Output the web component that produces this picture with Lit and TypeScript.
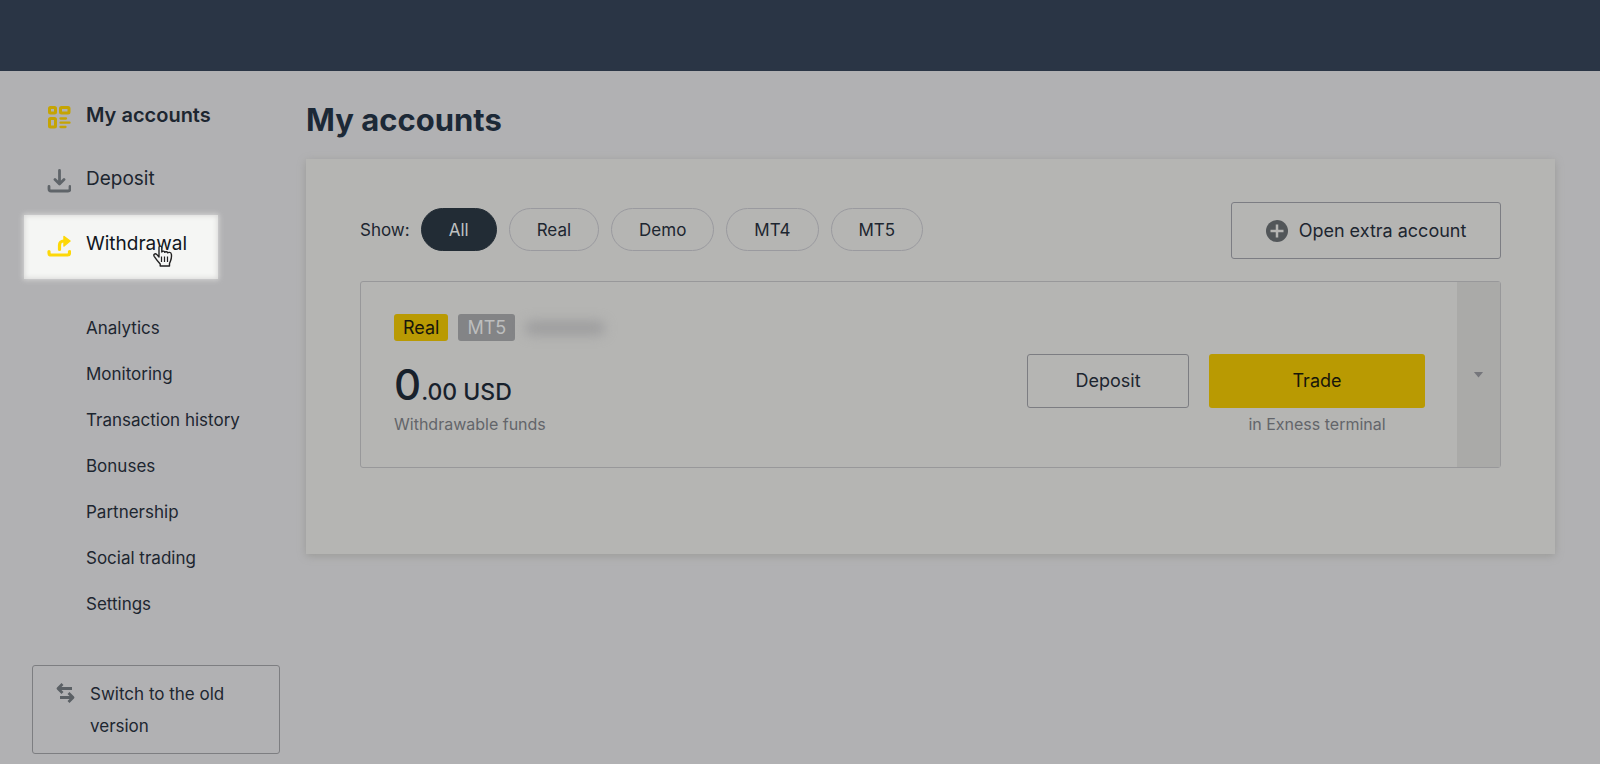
import { LitElement, html, css, svg } from "lit";
import { customElement, state } from "lit/decorators.js";

const gridIcon = svg`<svg class="icon" viewBox="0 0 24 24" fill="none" stroke="currentColor" stroke-width="3" stroke-linejoin="round" stroke-linecap="round">
  <rect x="2.5" y="2.5" width="6" height="5.5" rx="1"/>
  <rect x="13.500" y="2.5" width="8.500" height="5.5" rx="1"/>
  <rect x="2.5" y="13.500" width="6" height="8.500" rx="1"/>
  <path stroke-width="2.300" d="M13.500 13.500h5.500M13.500 17.700h9M13.500 22h5"/>
</svg>`;

const depositIcon = svg`<svg class="icon" viewBox="0 0 24 24" fill="none" stroke="currentColor" stroke-width="2.800" stroke-linejoin="round" stroke-linecap="round">
  <path d="M12.500 1.500v13M8 10.500l4.500 4.500 4.500-4.500M2 17.500v2.500a2 2 0 0 0 2 2h17a2 2 0 0 0 2-2v-2.500"/>
</svg>`;

const withdrawIcon = svg`<svg class="icon" viewBox="0 0 24 24" fill="none" stroke="currentColor" stroke-width="3.200" stroke-linejoin="round" stroke-linecap="round">
  <path d="M12.500 15.500v-4.500a4 4 0 0 1 4-4h2M2 17.500v1.500a2 2 0 0 0 2 2h16.500a2 2 0 0 0 2-2v-1.500"/>
  <path d="M17 2.500l6 4.500-6 5z" fill="currentColor" stroke-width="1.500"/>
</svg>`;

const swapIcon = svg`<svg class="swap" viewBox="0 0 20 20" fill="none" stroke="currentColor" stroke-width="2.800" stroke-linejoin="round">
  <path d="M16 5.500H2M6.500 1L2 5.500 6.500 10M4 14.500h13M12.500 10l4.500 4.500-4.500 4.500"/>
</svg>`;

const plusIcon = svg`<svg class="plus" viewBox="0 0 22 22">
  <circle cx="11" cy="11" r="11" fill="#525659"/>
  <path d="M11 4.500v13M4.500 11h13" stroke="#b5b5b3" stroke-width="2.500"/>
</svg>`;

const handCursor = svg`<svg class="hand" viewBox="0 0 22 24" aria-hidden="true">
  <path d="M7 13V3.500c0-1.800 2.600-1.800 2.800 0V8c.5-1.300 2.800-1.200 3 .3.600-1 2.700-.8 2.900.6.700-.9 3.300-.8 3.600 1 .4 2 .2 4.500-.8 7l-1 2.600V22H8.200v-2c-1.500-1.700-4.500-5.500-6-7.700-1.200-2 1-3.300 2.500-1.900z" fill="#f5f6f4" stroke="#222" stroke-width="1.400" stroke-linejoin="round"/>
  <path d="M9.500 12.500v5.500M12.500 12.500v5.500M15.500 12.500v5.500" stroke="#222" stroke-width="1.200"/>
</svg>`;

@customElement("app-root")
export class AppRoot extends LitElement {
  @state() private filter = "All";

  private sections = ["Analytics", "Monitoring", "Transaction history", "Bonuses", "Partnership", "Social trading", "Settings"];
  private filters = ["All", "Real", "Demo", "MT4", "MT5"];

  static styles = css`
    :host { display: block; min-height: 100vh; background: #b1b1b3; color: #1d2630; font: 18px/28px Inter, "Liberation Sans", sans-serif; }
    * { box-sizing: border-box; }
    a { color: inherit; text-decoration: none; }
    button { font: inherit; color: inherit; background: none; cursor: pointer; margin: 0; padding: 0; }
    ul { list-style: none; margin: 0; padding: 0; }
    .top { height: 71px; background: #2a3545; }
    .layout { display: grid; grid-template-columns: 306px minmax(0, 1fr); }
    .side { padding: 12px 24px 8px; }
    .link { display: flex; align-items: center; gap: 15px; height: 64px; padding-left: 23px; font-size: 19px; }
    .link.active { font-size: 20px; font-weight: 600; }
    .icon { width: 24px; height: 24px; color: #5f6469; flex: none; margin-top: 3px; }
    .active .icon { color: #c5a403; }
    .link.lit { position: relative; width: 194px; margin-top: 4px; padding-bottom: 6px; background: #f5f6f4; box-shadow: 0 0 5px 1px #d6d6d5, inset 0 0 5px 1px #d9d9d8; color: #11161d; }
    .lit .icon { color: #fdd808; }
    .hand { position: absolute; left: 128px; top: 29px; width: 22px; height: 24px; }
    .sub { margin-top: 26px; padding-left: 62px; font-size: 17px; }
    .sub a { display: block; line-height: 46px; }
    .switch { display: flex; gap: 14px; width: 248px; margin: 38px 0 0 8px; padding: 12px 40px 11px 23px; border: 1px solid #7d7e81; border-radius: 3px; text-align: left; font-size: 17px; line-height: 32px; }
    .swap { width: 20px; height: 20px; flex: none; margin-top: 5px; color: #5b6065; }
    main { padding: 28px 45px 28px 0; }
    h1 { margin: 0; font-size: 31px; line-height: 42px; font-weight: 700; color: #1c2937; }
    .panel { margin-top: 18px; min-height: 395px; padding: 43px 54px 86px; background: #b5b5b3; box-shadow: 0 2px 8px #9b9b98; }
    .bar { display: flex; justify-content: space-between; align-items: flex-start; }
    .filters { display: flex; align-items: center; gap: 11px; padding-top: 6px; font-size: 17px; }
    .pills { display: flex; gap: 12px; }
    .pill { height: 43px; padding: 0 27px; border: 1px solid #9a9a9f; border-radius: 22px; }
    .pill.on { background: #222c35; border-color: #222c35; color: #bfc1c1; }
    .open { display: flex; align-items: center; justify-content: center; gap: 11px; width: 270px; height: 57px; border: 1px solid #7c7d83; border-radius: 3px; }
    .plus { width: 22px; height: 22px; }
    .account { display: flex; margin-top: 22px; height: 187px; border: 1px solid #98989a; border-radius: 3px; }
    .body { flex: 1; display: flex; justify-content: space-between; padding: 32px 32px 0 33px; }
    .tags { display: flex; gap: 10px; align-items: center; }
    .tag { padding: 0 9px; border-radius: 3px; line-height: 27px; background: #b99a03; color: #17160c; }
    .tag.type { background: #838486; color: #bdbebe; }
    .number { width: 80px; height: 14px; background: #9d9d9e; border-radius: 7px; filter: blur(6px); }
    .amount { margin-top: 24px; font-size: 23px; line-height: 40px; font-weight: 500; color: #17212c; }
    .whole { font-size: 42px; }
    .note { font-size: 16px; line-height: 24px; color: #63656a; }
    .actions { display: flex; gap: 20px; padding-top: 40px; align-items: flex-start; }
    .deposit { width: 162px; height: 54px; border: 1px solid #7c7d82; border-radius: 3px; }
    .trade { display: flex; flex-direction: column; align-items: center; }
    .trade button { width: 216px; height: 54px; border: 0; border-radius: 3px; background: #b99a02; color: #17160a; margin-bottom: 4px; }
    .more { width: 43px; border: 0; background: #aaaaa8; display: grid; place-items: center; }
    .caret { width: 10px; height: 6px; background: #75767b; clip-path: polygon(0 0, 100% 0, 50% 100%); }
  `;

  render() {
    return html`
      <header class="top"></header>
      <div class="layout">
        <aside class="side">
          <nav>
            <a class="link active" href="#accounts">${gridIcon}<span>My accounts</span></a>
            <a class="link" href="#deposit">${depositIcon}<span>Deposit</span></a>
            <a class="link lit" href="#withdrawal">${withdrawIcon}<span>Withdrawal</span>${handCursor}</a>
            <ul class="sub">
              ${this.sections.map((s) => html`<li><a href="#">${s}</a></li>`)}
            </ul>
          </nav>
          <button class="switch">${swapIcon}<span>Switch to the old version</span></button>
        </aside>
        <main>
          <h1>My accounts</h1>
          <section class="panel">
            <div class="bar">
              <div class="filters">
                <span id="show">Show:</span>
                <div class="pills" role="group" aria-labelledby="show">
                  ${this.filters.map((f) => html`<button class="pill ${f === this.filter ? "on" : ""}" @click=${() => (this.filter = f)}>${f}</button>`)}
                </div>
              </div>
              <button class="open">${plusIcon}<span>Open extra account</span></button>
            </div>
            <article class="account">
              <div class="body">
                <div>
                  <div class="tags"><span class="tag">Real</span><span class="tag type">MT5</span><span class="number"></span></div>
                  <div class="amount"><span class="whole">0</span>.00 USD</div>
                  <div class="note">Withdrawable funds</div>
                </div>
                <div class="actions">
                  <button class="deposit">Deposit</button>
                  <div class="trade"><button>Trade</button><span class="note">in Exness terminal</span></div>
                </div>
              </div>
              <button class="more" aria-label="More"><span class="caret"></span></button>
            </article>
          </section>
        </main>
      </div>
    `;
  }
}
